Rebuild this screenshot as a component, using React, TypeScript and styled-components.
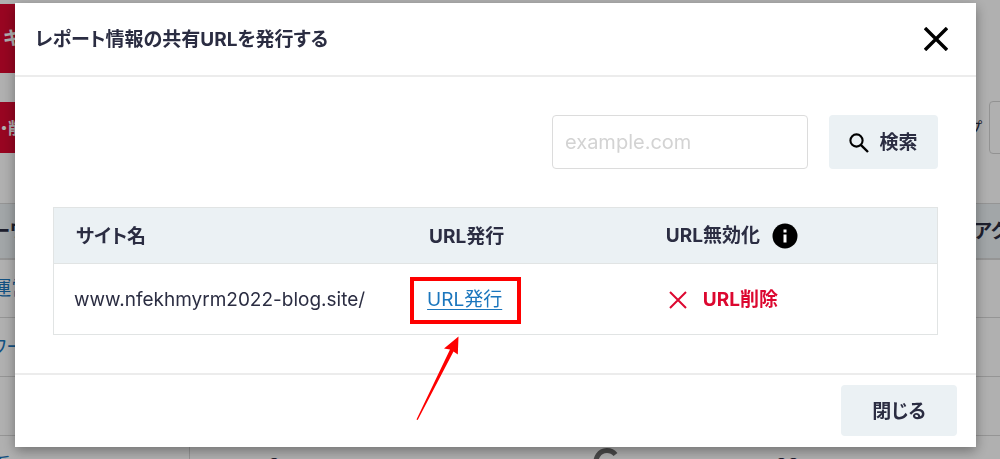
import React from "react";
import styled, { createGlobalStyle, css } from "styled-components";

const ink = "#2b2d42";
const line = "#e1e4e4";
const pale = "#ebf1f4";
const red = "#dc0830";
const blue = "#1b76bd";

const GlobalStyle = createGlobalStyle`
  *, *::before, *::after { box-sizing: border-box; }
  body {
    margin: 0;
    color: ${ink};
    background: #fff;
    font-family: Inter, "Noto Sans CJK JP", sans-serif;
    font-size: 19px;
    line-height: 28px;
    font-feature-settings: "palt";
  }
  button, input { font: inherit; color: inherit; font-feature-settings: inherit; }
`;

/* ---- Report page behind the dialog ---- */

const Page = styled.div`
  height: 100vh;
  overflow: hidden;
`;

const PageContent = styled.div`
  width: 1200px;
  margin-left: -46px;
  padding-top: 4px;
`;

const Banner = styled.button`
  display: block;
  width: 300px;
  height: 69px;
  padding: 0 0 0 49px;
  border: 0;
  background: ${red};
  color: #fff;
  font-weight: 700;
  text-align: left;
`;

const PageTools = styled.div`
  display: flex;
  align-items: center;
  height: 51px;
  margin: 29px 0 50px;
`;

const EditButton = styled.button`
  width: 240px;
  height: 51px;
  padding: 0 0 0 14px;
  border: 0;
  background: ${red};
  color: #fff;
  font-size: 16px;
  font-weight: 700;
  text-align: left;
`;

const GroupField = styled.label`
  display: flex;
  align-items: center;
  justify-content: flex-end;
  gap: 7px;
  width: 835px;
  font-size: 16px;
`;

const GroupInput = styled.input`
  width: 40px;
  height: 53px;
  border: 1px solid #d4d4d4;
  border-radius: 4px;
  background: #fff;
`;

const ReportTable = styled.table`
  width: 100%;
  table-layout: fixed;
  border-collapse: collapse;

  th, td { padding: 2px 20px 0; border-bottom: 1px solid #d8d8d8; text-align: center; }
  th { height: 55px; background: ${pale}; border-top: 1px solid #d8d8d8; border-bottom-width: 2px; }
  td { height: 59px; font-weight: 700; }
  th:first-child, td:first-child { text-align: left; font-weight: 400; white-space: nowrap; overflow: hidden; }
  th:first-child { font-weight: 700; }
  td:first-child { border-right: 1px solid #d8d8d8; }
  th:last-child { text-align: left; padding-left: 16px; }
`;

const Col = styled.col<{ $w?: number }>`
  ${(p) => p.$w && css`width: ${p.$w}px;`}
`;

const PageLink = styled.a`
  color: ${blue};
  text-decoration: none;
`;

/* ---- Dialog ---- */

const Overlay = styled.div`
  position: fixed;
  inset: 0;
  padding: 3px 24px 12px 15px;
  background: rgba(0, 0, 0, 0.31);
`;

const Dialog = styled.section`
  background: #fff;
  box-shadow: 0 4px 12px rgba(0, 0, 0, 0.36);
`;

const DialogHeader = styled.header`
  display: flex;
  align-items: center;
  justify-content: space-between;
  height: 74px;
  padding: 0 28px 0 20px;
  border-bottom: 2px solid #ececec;
`;

const Title = styled.h2`
  margin: 0;
  padding-top: 2px;
  font-size: 19px;
  font-weight: 700;
`;

const IconButton = styled.button`
  display: flex;
  padding: 0;
  border: 0;
  background: none;
  color: #000;
`;

const DialogBody = styled.div`
  display: grid;
  gap: 38px;
  padding: 38px;
`;

const SearchForm = styled.form`
  display: flex;
  justify-content: flex-end;
  gap: 21px;
`;

const SearchInput = styled.input`
  width: 256px;
  height: 54px;
  padding: 0 12px;
  border: 1px solid #dcdcdc;
  border-radius: 4px;
  background: #fff;
  font-size: 20px;
  &::placeholder { color: #d3d3d3; opacity: 1; }
`;

const Button = styled.button<{ $w: number; $h: number }>`
  display: flex;
  align-items: center;
  justify-content: center;
  gap: 10px;
  width: ${(p) => p.$w}px;
  height: ${(p) => p.$h}px;
  padding: 2px 0 0;
  border: 0;
  border-radius: 4px;
  background: ${pale};
  font-weight: 700;
`;

const SiteTable = styled.table`
  width: 100%;
  table-layout: fixed;
  border-collapse: collapse;
  border: 1px solid ${line};

  th, td { padding: 2px 20px 0; text-align: left; }
  th { height: 56px; padding-left: 22px; background: ${pale}; font-weight: 700; border-bottom: 1px solid ${line}; }
  th:last-child { padding: 0 20px; }
  td { height: 71px; }
  th:nth-child(1) { width: 40%; }
  th:nth-child(2) { width: 27%; }
`;

const HeadingWithInfo = styled.span`
  display: flex;
  align-items: center;
  gap: 12px;
`;

const DeleteButton = styled.button`
  display: flex;
  align-items: center;
  gap: 16px;
  padding: 0 0 0 3px;
  border: 0;
  background: none;
  color: ${red};
  font-weight: 700;
`;

const Callout = styled.span`
  position: relative;
  display: inline-block;

  &::before {
    content: "";
    position: absolute;
    inset: -9px -19px -10px -17px;
    border: 4px solid #fe0000;
    pointer-events: none;
  }
`;

const Arrow = styled.svg`
  position: absolute;
  top: 50px;
  left: -12px;
  pointer-events: none;
`;

const IssueLink = styled.a`
  color: ${blue};
  text-decoration: underline;
  text-underline-offset: 3px;
`;

const DialogFooter = styled.footer`
  display: flex;
  justify-content: flex-end;
  padding: 10px 19px 11px;
  border-top: 2px solid #ececec;
`;

const rows = [
  { word: "の運営", first: "2", second: "10" },
  { word: "リワード", first: "5", second: "18" },
  { word: "", first: "", second: "" },
  { word: "の系", first: "3", second: "22" },
];

function GoogleMark() {
  return (
    <svg width="28" height="28" viewBox="0 0 28 28" fill="none" stroke="#6b6b6b" strokeWidth="5" aria-hidden="true">
      <path d="M22.5 6.5A11 11 0 1 0 25 14.5H14" />
    </svg>
  );
}

function ReportPage() {
  return (
    <Page>
      <PageContent>
        <Banner type="button">キーワード登録</Banner>
        <PageTools>
          <EditButton type="button">追加・削除</EditButton>
          <GroupField>
            グループ
            <GroupInput />
          </GroupField>
        </PageTools>
        <ReportTable>
          <colgroup>
            <Col $w={235} />
            <Col $w={170} />
            <Col $w={169} />
            <Col $w={157} />
            <Col $w={205} />
            <Col $w={68} />
            <Col />
          </colgroup>
          <thead>
            <tr>
              <th>キーワード</th>
              <th />
              <th />
              <th />
              <th />
              <th />
              <th>アクセス</th>
            </tr>
          </thead>
          <tbody>
            {rows.map((row, i) => (
              <tr key={i}>
                <td><PageLink href="#">{row.word}</PageLink></td>
                <td>{row.first}</td>
                <td />
                <td>{row.word && <GoogleMark />}</td>
                <td>{row.second}</td>
                <td />
                <td />
              </tr>
            ))}
          </tbody>
        </ReportTable>
      </PageContent>
    </Page>
  );
}

export default function App() {
  return (
    <>
      <GlobalStyle />
      <ReportPage />
      <Overlay>
        <Dialog role="dialog" aria-modal="true" aria-labelledby="dialog-title">
          <DialogHeader>
            <Title id="dialog-title">レポート情報の共有URLを発行する</Title>
            <IconButton type="button" aria-label="閉じる">
              <svg width="24" height="24" viewBox="0 0 24 24" stroke="currentColor" strokeWidth="3.4">
                <path d="M1 1 23 23M23 1 1 23" />
              </svg>
            </IconButton>
          </DialogHeader>
          <DialogBody>
            <SearchForm onSubmit={(e) => e.preventDefault()}>
              <SearchInput type="text" placeholder="example.com" aria-label="サイト名" />
              <Button $w={109} $h={54}>
                <svg width="20" height="20" viewBox="0 0 20 20" fill="none" stroke="#000" strokeWidth="2.1">
                  <circle cx="7.5" cy="7.5" r="6.1" />
                  <path d="M11.8 11.8 19 19" strokeWidth="2.4" />
                </svg>
                検索
              </Button>
            </SearchForm>
            <SiteTable>
              <thead>
                <tr>
                  <th>サイト名</th>
                  <th>URL発行</th>
                  <th>
                    <HeadingWithInfo>
                      URL無効化
                      <svg width="26" height="26" viewBox="0 0 26 26" aria-hidden="true">
                        <circle cx="13" cy="13" r="12.5" />
                        <path d="M11.5 6.5h3v3h-3zM11.5 11.5h3v8h-3z" fill="#fff" />
                      </svg>
                    </HeadingWithInfo>
                  </th>
                </tr>
              </thead>
              <tbody>
                <tr>
                  <td>www.nfekhmyrm2022-blog.site/</td>
                  <td>
                    <Callout>
                      <IssueLink href="#">URL発行</IssueLink>
                      <Arrow width="44" height="86" viewBox="0 0 44 86" fill="#fe0000" aria-hidden="true">
                        <path d="M43.500 0.500 29 12.500 35 13.500 1.500 83.500 2.700 84 38.500 15.500 42.800 18.500Z" />
                      </Arrow>
                    </Callout>
                  </td>
                  <td>
                    <DeleteButton type="button">
                      <svg width="18" height="18" viewBox="0 0 18 18" stroke="currentColor" strokeWidth="2">
                        <path d="M1 1 17 17M17 1 1 17" />
                      </svg>
                      URL削除
                    </DeleteButton>
                  </td>
                </tr>
              </tbody>
            </SiteTable>
          </DialogBody>
          <DialogFooter>
            <Button type="button" $w={116} $h={51}>閉じる</Button>
          </DialogFooter>
        </Dialog>
      </Overlay>
    </>
  );
}
